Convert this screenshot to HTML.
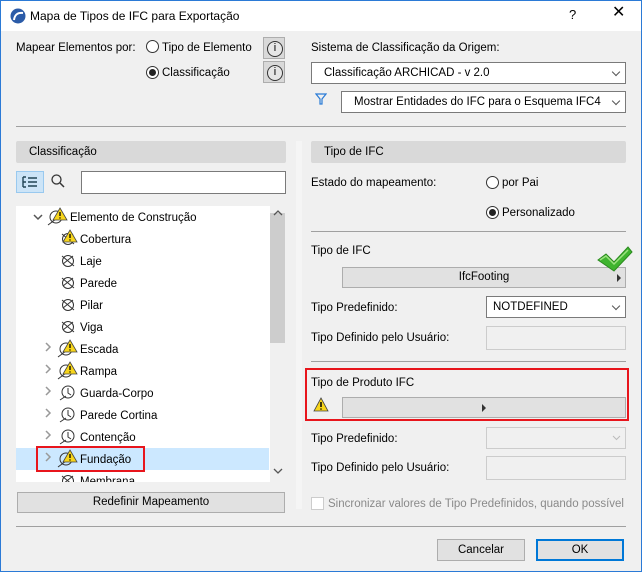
<!DOCTYPE html>
<html><head><meta charset="utf-8"><style>
*{box-sizing:border-box;margin:0;padding:0}
body{width:642px;height:572px;overflow:hidden;background:#f0f0f0;font-family:"Liberation Sans",sans-serif;font-size:11.5px;color:#000;position:relative}
.a{position:absolute}
.t{position:absolute;white-space:nowrap;line-height:14px}
.btn{position:absolute;background:#e1e1e1;border:1px solid #adadad;text-align:center;line-height:18px}
.sel{position:absolute;background:#fff;border:1px solid #7a7a7a;line-height:20px;padding-left:12px}
.chev{position:absolute;right:6px;top:6px;width:6px;height:6px;border-right:1px solid #555;border-bottom:1px solid #555;transform:rotate(45deg)}
.rad{position:absolute;width:13px;height:13px;border:1px solid #333;border-radius:50%;background:#fff}
.rad.on::after{content:"";position:absolute;left:2px;top:2px;width:7px;height:7px;border-radius:50%;background:#222}
.info{position:absolute;width:22px;height:22px;background:#d9d9d9;border:1px solid #adadad}
.info::after{content:"i";position:absolute;left:3px;top:3px;width:14px;height:14px;border:1px solid #333;border-radius:50%;font-size:11px;line-height:13px;text-align:center;background:#e6e6e6}
.hdr{position:absolute;background:#d9d9d9;border-radius:2px;height:22px;line-height:22px;padding-left:13px}
</style></head><body>
<div class="a" style="left:0;top:0;width:642px;height:572px;border:1px solid #2b7ad6"></div>
<div class="a" style="left:1px;top:1px;width:640px;height:30px;background:#fff"></div>
<svg class="a" style="left:10px;top:8px" width="16" height="16"><circle cx="8" cy="8" r="7.5" fill="#2b5ba8"/><path d="M4 12 Q5 4 13 5" stroke="#fff" stroke-width="2" fill="none"/></svg>
<div class="t" style="left:30px;top:9px;font-size:12px">Mapa de Tipos de IFC para Exportação</div>
<div class="t" style="left:569px;top:8px;font-size:13px">?</div>
<div class="t" style="left:612px;top:6px;font-size:16px">✕</div>

<div class="t" style="left:16px;top:41px">Mapear Elementos por:</div>
<div class="rad" style="left:146px;top:40px"></div><div class="t" style="left:162px;top:41px">Tipo de Elemento</div>
<div class="rad on" style="left:146px;top:66px"></div><div class="t" style="left:162px;top:66px">Classificação</div>
<div class="info" style="left:263px;top:37px"></div>
<div class="info" style="left:263px;top:61px"></div>

<div class="t" style="left:311px;top:41px">Sistema de Classificação da Origem:</div>
<div class="sel" style="left:311px;top:62px;width:315px;height:22px">Classificação ARCHICAD - v 2.0<div class="chev"></div></div>
<svg class="a" style="left:315px;top:93px" width="12" height="12"><path d="M1 1H11L7 6V11H5V6Z" fill="none" stroke="#2a7bd6" stroke-width="1.2"/></svg>
<div class="sel" style="left:341px;top:91px;width:285px;height:22px">Mostrar Entidades do IFC para o Esquema IFC4<div class="chev"></div></div>

<div class="a" style="left:16px;top:126px;width:610px;height:1px;background:#a0a0a0"></div>

<div class="a" style="left:296px;top:141px;width:6px;height:368px;background:#f5f5f5"></div>
<div class="hdr" style="left:16px;top:141px;width:270px">Classificação</div>
<div class="a" style="left:16px;top:171px;width:28px;height:22px;background:#cce4f7;border:1px solid #99c9ef"></div>
<svg class="a" style="left:22px;top:176px" width="16" height="12"><path d="M1 1H4M1 1V11M1 6H4M1 11H4M6 2H15M6 6H15M6 10H15" stroke="#245" stroke-width="1.4" fill="none"/></svg>
<svg class="a" style="left:50px;top:173px" width="16" height="16"><circle cx="6.5" cy="6.5" r="4.5" stroke="#333" stroke-width="1.3" fill="none"/><path d="M10 10L14 14" stroke="#333" stroke-width="1.5"/></svg>
<div class="a" style="left:81px;top:171px;width:205px;height:23px;background:#fff;border:1px solid #7a7a7a"></div>

<div class="a" style="left:16px;top:206px;width:254px;height:276px;background:#fff"></div>
<div class="a" style="left:270px;top:206px;width:16px;height:276px;background:#f0f0f0"></div>
<div class="a" style="left:270px;top:213px;width:15px;height:130px;background:#cdcdcd"></div>
<svg class="a" style="left:273px;top:210px" width="10" height="6"><path d="M1 5l4-4 4 4" stroke="#555" stroke-width="1.3" fill="none"/></svg>
<svg class="a" style="left:273px;top:468px" width="10" height="6"><path d="M1 1l4 4 4-4" stroke="#555" stroke-width="1.3" fill="none"/></svg>
<div class="a" style="left:16px;top:448px;width:253px;height:22px;background:#cce8ff"></div>
<div class="a" style="left:36px;top:446px;width:109px;height:26px;border:2px solid #e8151c"></div>

<svg class="a" style="left:16px;top:206px;overflow:hidden" width="254" height="276">
<g font-family="Liberation Sans,sans-serif" font-size="11.5" fill="#000">
<path d="M18 9l4 4 4-4" stroke="#555" stroke-width="1.5" fill="none"/>
<text x="54" y="15">Elemento de Construção</text>
<text x="64" y="37">Cobertura</text>
<text x="64" y="59">Laje</text>
<text x="64" y="81">Parede</text>
<text x="64" y="103">Pilar</text>
<text x="64" y="125">Viga</text>
<text x="64" y="147">Escada</text>
<text x="64" y="169">Rampa</text>
<text x="64" y="191">Guarda-Corpo</text>
<text x="64" y="213">Parede Cortina</text>
<text x="64" y="235">Contenção</text>
<text x="64" y="257">Fundação</text>
<text x="64" y="279">Membrana</text>
</g>
<g stroke="#999" stroke-width="1.5" fill="none">
<path d="M30 137l4 4-4 4M30 159l4 4-4 4M30 181l4 4-4 4M30 203l4 4-4 4M30 225l4 4-4 4M30 247l4 4-4 4"/>
</g>
<g stroke="#333" stroke-width="1" fill="none">
<g id="b"><circle cx="52" cy="55" r="5.5"/><path d="M46 50l12 10M47 58l10-8"/></g>
<use href="#b" y="22"/><use href="#b" y="44"/><use href="#b" y="66"/><use href="#b" x="0" y="-22"/><use href="#b" y="220"/>
<g id="c"><circle cx="52" cy="186" r="6"/><path d="M52 182v5l3 2M44 194l6-4"/></g>
<use href="#c" y="22"/><use href="#c" y="44"/>
<g id="d"><circle cx="40" cy="11" r="6"/><path d="M32 19l8-6"/></g>
<use href="#d" x="10" y="132"/><use href="#d" x="10" y="154"/><use href="#d" x="10" y="242"/>
</g>
<g id="w"><path d="M44 2l7 12h-14z" fill="#f7d51b" stroke="#444" stroke-width="0.8"/><path d="M44 6v4" stroke="#000" stroke-width="1.3"/><circle cx="44" cy="12" r="0.7"/></g>
<use href="#w" x="10" y="22"/><use href="#w" x="10" y="132"/><use href="#w" x="10" y="154"/><use href="#w" x="10" y="242"/>
</svg>

<div class="btn" style="left:17px;top:492px;width:268px;height:21px">Redefinir Mapeamento</div>

<div class="hdr" style="left:311px;top:141px;width:315px">Tipo de IFC</div>
<div class="t" style="left:311px;top:176px">Estado do mapeamento:</div>
<div class="rad" style="left:486px;top:176px"></div><div class="t" style="left:502px;top:176px">por Pai</div>
<div class="rad on" style="left:486px;top:206px"></div><div class="t" style="left:502px;top:206px">Personalizado</div>
<div class="a" style="left:311px;top:231px;width:315px;height:1px;background:#a0a0a0"></div>
<div class="t" style="left:311px;top:244px">Tipo de IFC</div>
<div class="btn" style="left:342px;top:267px;width:284px;height:21px;background:#e1e1e1">IfcFooting</div>
<div class="a" style="left:617px;top:274px;border-left:4px solid #333;border-top:4px solid transparent;border-bottom:4px solid transparent"></div>
<svg class="a" style="left:596px;top:244px" width="38" height="30"><path d="M2 16l8-6 8 8L32 3l4 5-18 19z" fill="#3fb42f" stroke="#2a8a1e" stroke-width="1"/><path d="M4 16l6-4 8 8L32 6" stroke="#9be27f" stroke-width="1.5" fill="none"/></svg>
<div class="t" style="left:311px;top:301px">Tipo Predefinido:</div>
<div class="sel" style="left:486px;top:296px;width:140px;height:22px;padding-left:6px">NOTDEFINED<div class="chev"></div></div>
<div class="t" style="left:311px;top:331px">Tipo Definido pelo Usuário:</div>
<div class="a" style="left:486px;top:326px;width:140px;height:24px;background:#f0f0f0;border:1px solid #ccc"></div>
<div class="a" style="left:311px;top:361px;width:315px;height:1px;background:#a0a0a0"></div>
<div class="a" style="left:305px;top:368px;width:324px;height:53px;border:2px solid #e8151c"></div>
<div class="t" style="left:311px;top:376px">Tipo de Produto IFC</div>
<svg class="a" style="left:313px;top:397px" width="16" height="16"><path d="M8 1l7 13H1z" fill="#f7d51b" stroke="#444" stroke-width="0.8"/><path d="M8 5v5" stroke="#000" stroke-width="1.5"/><circle cx="8" cy="12" r="0.8"/></svg>
<div class="btn" style="left:342px;top:397px;width:284px;height:21px"></div>
<div class="a" style="left:482px;top:404px;border-left:4px solid #333;border-top:4px solid transparent;border-bottom:4px solid transparent"></div>
<div class="t" style="left:311px;top:432px">Tipo Predefinido:</div>
<div class="a" style="left:486px;top:427px;width:140px;height:22px;background:#f0f0f0;border:1px solid #ccc"></div>
<svg class="a" style="left:612px;top:435px" width="9" height="6"><path d="M1 1l3.5 3.5L8 1" stroke="#bbb" fill="none"/></svg>
<div class="t" style="left:311px;top:461px">Tipo Definido pelo Usuário:</div>
<div class="a" style="left:486px;top:456px;width:140px;height:24px;background:#f0f0f0;border:1px solid #ccc"></div>
<div class="a" style="left:311px;top:497px;width:13px;height:13px;background:#fff;border:1px solid #ccc"></div>
<div class="t" style="left:328px;top:497px;color:#8a8a8a">Sincronizar valores de Tipo Predefinidos, quando possível</div>

<div class="a" style="left:16px;top:526px;width:610px;height:1px;background:#a0a0a0"></div>
<div class="btn" style="left:437px;top:539px;width:88px;height:22px;line-height:20px">Cancelar</div>
<div class="btn" style="left:536px;top:539px;width:88px;height:22px;line-height:18px;border:2px solid #0078d7">OK</div>
</body></html>
